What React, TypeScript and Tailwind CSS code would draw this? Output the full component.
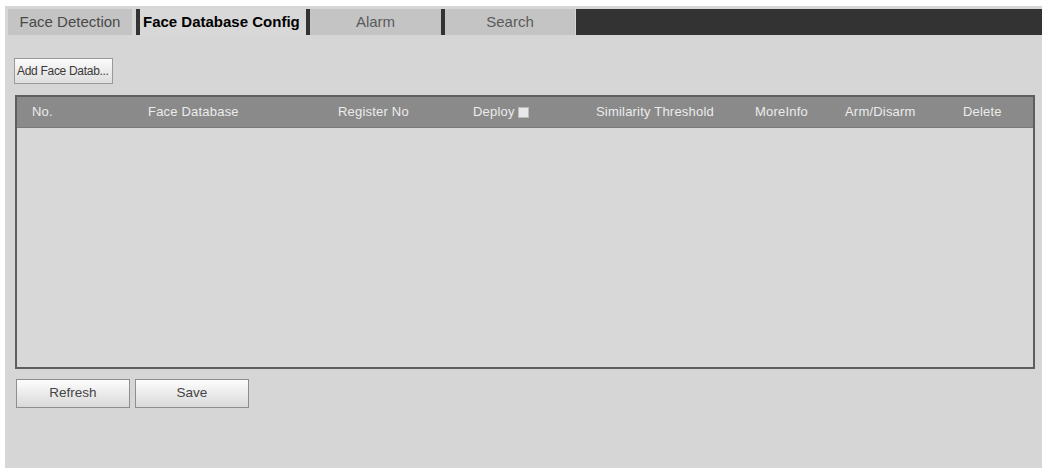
import React from "react";

const cols = [
  { label: "No.", w: "w-[116px]" },
  { label: "Face Database", w: "w-[190px]" },
  { label: "Register No", w: "w-[135px]" },
  { label: "Deploy", w: "w-[123px]", box: true },
  { label: "Similarity Threshold", w: "w-[159px]" },
  { label: "MoreInfo", w: "w-[90px]" },
  { label: "Arm/Disarm", w: "w-[118px]" },
  { label: "Delete", w: "w-[60px]" },
];

export default function App() {
  return (
    <div className="w-[1045px] h-[468px] bg-white pl-[5px] pt-[6px] pr-[3px] overflow-hidden" style={{ fontFamily: '"Liberation Sans", Arial, sans-serif' }}>
      <div className="h-[462px] bg-[#d6d6d6] pt-[3px] flex flex-col">
        {/* Tabs */}
        <div className="flex h-[26px] items-stretch text-[15px] pl-[3px]">
          <div className="w-[124px] bg-[#c4c4c4] text-[#4a4a4a] flex items-center justify-center">Face Detection</div>
          <div className="w-[4px] ml-[4px] bg-[#333]" />
          <div className="w-[166px] bg-[#d8d8d8] text-black font-bold flex items-center pl-[3px]">Face Database Config</div>
          <div className="w-[4px] bg-[#333]" />
          <div className="w-[131px] bg-[#c4c4c4] text-[#5a5a5a] flex items-center justify-center">Alarm</div>
          <div className="w-[4px] bg-[#333]" />
          <div className="w-[130px] bg-[#c4c4c4] text-[#5a5a5a] flex items-center justify-center">Search</div>
          <div className="flex-1 bg-[#333] ml-[1px]" />
        </div>

        {/* Add button */}
        <div className="pl-[9px] mt-[23px]">
          <button className="w-[99px] h-[26px] border border-[#9a9a9a] bg-gradient-to-b from-[#fbfbfb] to-[#dedede] text-[12px] text-[#3a3a3a] text-left pl-[2px] tracking-[-0.3px]">
            Add Face Datab...
          </button>
        </div>

        {/* Table */}
        <div className="ml-[10px] mr-[7px] mt-[11px] h-[274px] border-2 border-[#5e5e5e] bg-[#d8d8d8] flex flex-col">
          <div className="h-[31px] bg-[#8a8a8a] flex items-center text-[13px] tracking-[0.2px] text-[#ececec] pl-[15px] border-b border-[#7a7a7a]">
            {cols.map((c) => (
              <div key={c.label} className={`${c.w} shrink-0 flex items-center`}>
                <span>{c.label}</span>
                {c.box && <span className="inline-block w-[11px] h-[11px] bg-[#e8e8e8] ml-[3px] border border-[#bbb]" />}
              </div>
            ))}
          </div>
          <div className="flex-1" />
        </div>

        {/* Bottom buttons */}
        <div className="flex gap-[5px] pl-[11px] mt-[10px]">
          <button className="w-[114px] h-[29px] border border-[#8e8e8e] bg-gradient-to-b from-[#fdfdfd] to-[#d9d9d9] text-[13.5px] text-[#444]">Refresh</button>
          <button className="w-[114px] h-[29px] border border-[#8e8e8e] bg-gradient-to-b from-[#fdfdfd] to-[#d9d9d9] text-[13.5px] text-[#444]">Save</button>
        </div>
      </div>
    </div>
  );
}
